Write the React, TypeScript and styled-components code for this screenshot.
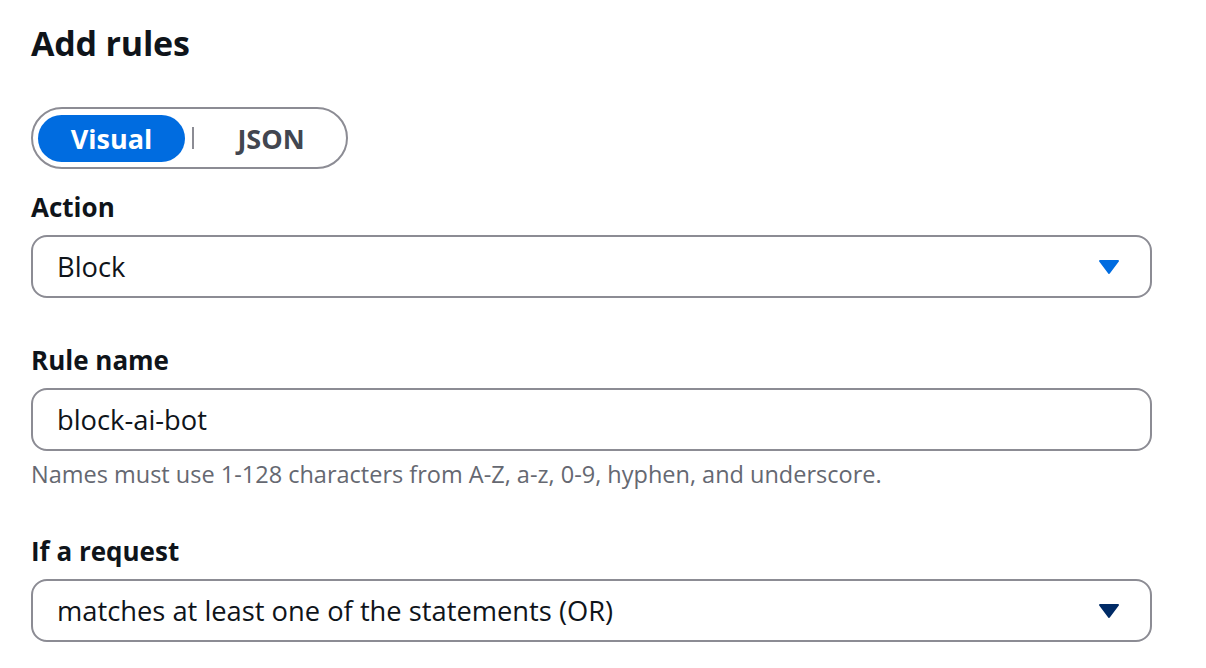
import React from "react";
import styled, { createGlobalStyle } from "styled-components";

const Global = createGlobalStyle`
  html, body { margin: 0; padding: 0; background: #ffffff; }
  body { font-family: "Open Sans", "Noto Sans", Arial, sans-serif; color: #0f141a; }
`;

const Page = styled.div`
  width: 1121px;
  padding: 20px 0 0 31px;
  display: flex;
  flex-direction: column;
`;

const Title = styled.h2`
  margin: 0;
  font-size: 34px;
  line-height: 46px;
  font-weight: 700;
  color: #0f141a;
  letter-spacing: -0.2px;
`;

const Toggle = styled.div`
  margin-top: 41px;
  width: 317px;
  height: 62px;
  box-sizing: border-box;
  border: 2px solid #8c8c94;
  border-radius: 31px;
  display: flex;
  align-items: center;
  padding: 0 5px;
`;

const Seg = styled.div<{ $active?: boolean }>`
  flex: 0 0 ${(p) => (p.$active ? "147px" : "140px")};
  height: 47px;
  border-radius: 24px;
  display: flex;
  align-items: center;
  justify-content: center;
  font-size: 27px;
  font-weight: 700;
  background: ${(p) => (p.$active ? "#006ce0" : "transparent")};
  color: ${(p) => (p.$active ? "#ffffff" : "#424650")};
`;

const Divider = styled.div`
  flex: 0 0 2px;
  height: 22px;
  background: #8c8c94;
  margin: 0 7px;
`;

const Field = styled.div<{ $top: number }>`
  margin-top: ${(p) => p.$top}px;
  display: flex;
  flex-direction: column;
`;

const Label = styled.div`
  font-size: 26px;
  line-height: 36px;
  font-weight: 700;
  color: #0f141a;
  margin-bottom: 10px;
`;

const Box = styled.div`
  height: 63px;
  flex: 0 0 63px;
  box-sizing: border-box;
  border: 2px solid #8c8c94;
  border-radius: 16px;
  display: flex;
  align-items: center;
  justify-content: space-between;
  padding: 0 30px 0 24px;
  font-size: 27.3px;
  color: #0f141a;
`;

const Hint = styled.div`
  margin-top: 6px;
  font-size: 23.5px;
  line-height: 34px;
  color: #656871;
`;

const Caret = ({ color }: { color: string }) => (
  <svg width="22" height="16" viewBox="0 0 22 16">
    <path d="M2 2 H20 L11 14 Z" fill={color} stroke={color} strokeWidth="2" strokeLinejoin="round" />
  </svg>
);

export default function App() {
  return (
    <>
      <Global />
      <Page>
        <Title>Add rules</Title>
        <Toggle>
          <Seg $active>Visual</Seg>
          <Divider />
          <Seg>JSON</Seg>
        </Toggle>
        <Field $top={20}>
          <Label>Action</Label>
          <Box>
            <span>Block</span>
            <Caret color="#006ce0" />
          </Box>
        </Field>
        <Field $top={44}>
          <Label>Rule name</Label>
          <Box>
            <span>block-ai-bot</span>
          </Box>
          <Hint>Names must use 1-128 characters from A-Z, a-z, 0-9, hyphen, and underscore.</Hint>
        </Field>
        <Field $top={42}>
          <Label>If a request</Label>
          <Box>
            <span>matches at least one of the statements (OR)</span>
            <Caret color="#002b66" />
          </Box>
        </Field>
      </Page>
    </>
  );
}
